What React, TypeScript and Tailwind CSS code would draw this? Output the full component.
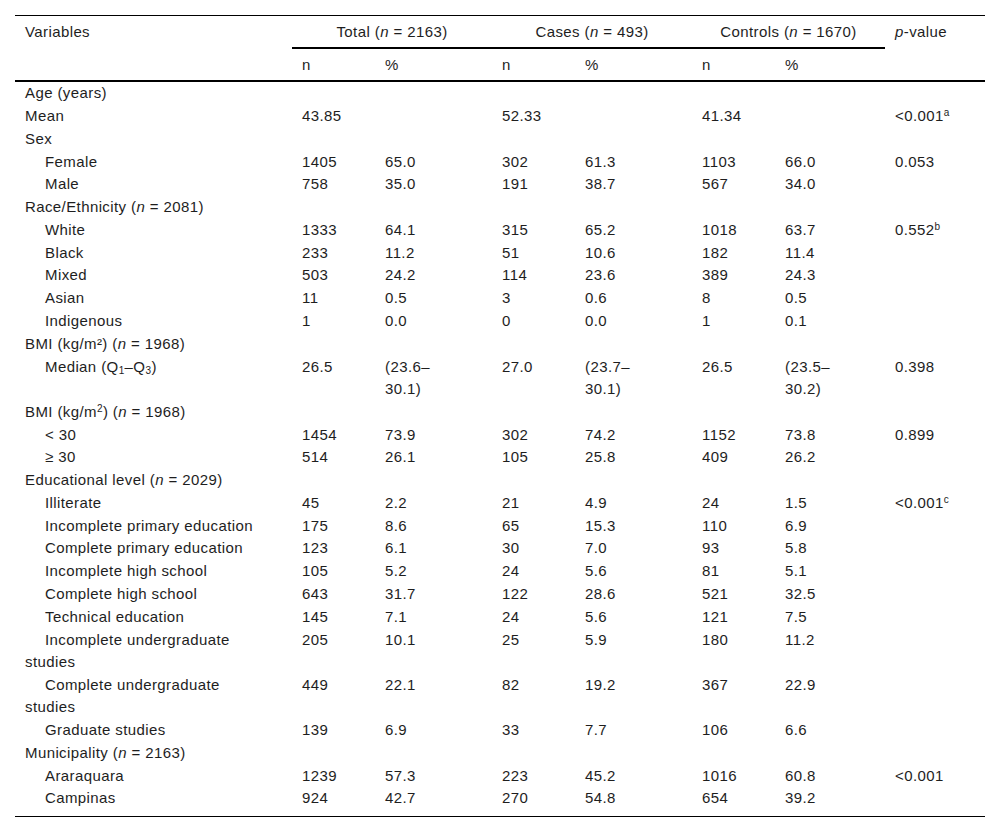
import React from "react";

type Row = {
  label: React.ReactNode;
  indent?: boolean;
  cells?: React.ReactNode[];
  p?: React.ReactNode;
};

const sup = (s: string) => <sup className="text-[10px]">{s}</sup>;
const I = ({ children }: { children: React.ReactNode }) => <i>{children}</i>;

const rows: Row[] = [
  { label: "Age (years)" },
  { label: "Mean", cells: ["43.85", "", "52.33", "", "41.34", ""], p: <>&lt;0.001{sup("a")}</> },
  { label: "Sex" },
  { label: "Female", indent: true, cells: ["1405", "65.0", "302", "61.3", "1103", "66.0"], p: "0.053" },
  { label: "Male", indent: true, cells: ["758", "35.0", "191", "38.7", "567", "34.0"] },
  { label: <>Race/Ethnicity (<I>n</I> = 2081)</> },
  { label: "White", indent: true, cells: ["1333", "64.1", "315", "65.2", "1018", "63.7"], p: <>0.552{sup("b")}</> },
  { label: "Black", indent: true, cells: ["233", "11.2", "51", "10.6", "182", "11.4"] },
  { label: "Mixed", indent: true, cells: ["503", "24.2", "114", "23.6", "389", "24.3"] },
  { label: "Asian", indent: true, cells: ["11", "0.5", "3", "0.6", "8", "0.5"] },
  { label: "Indigenous", indent: true, cells: ["1", "0.0", "0", "0.0", "1", "0.1"] },
  { label: <>BMI (kg/m²) (<I>n</I> = 1968)</> },
  {
    label: (
      <>
        Median (Q<sub className="text-[10px]">1</sub>–Q<sub className="text-[10px]">3</sub>)
      </>
    ),
    indent: true,
    cells: [
      "26.5",
      <>(23.6–<br />30.1)</>,
      "27.0",
      <>(23.7–<br />30.1)</>,
      "26.5",
      <>(23.5–<br />30.2)</>,
    ],
    p: "0.398",
  },
  { label: <>BMI (kg/m{sup("2")}) (<I>n</I> = 1968)</> },
  { label: "< 30", indent: true, cells: ["1454", "73.9", "302", "74.2", "1152", "73.8"], p: "0.899" },
  { label: "≥ 30", indent: true, cells: ["514", "26.1", "105", "25.8", "409", "26.2"] },
  { label: <>Educational level (<I>n</I> = 2029)</> },
  { label: "Illiterate", indent: true, cells: ["45", "2.2", "21", "4.9", "24", "1.5"], p: <>&lt;0.001{sup("c")}</> },
  { label: "Incomplete primary education", indent: true, cells: ["175", "8.6", "65", "15.3", "110", "6.9"] },
  { label: "Complete primary education", indent: true, cells: ["123", "6.1", "30", "7.0", "93", "5.8"] },
  { label: "Incomplete high school", indent: true, cells: ["105", "5.2", "24", "5.6", "81", "5.1"] },
  { label: "Complete high school", indent: true, cells: ["643", "31.7", "122", "28.6", "521", "32.5"] },
  { label: "Technical education", indent: true, cells: ["145", "7.1", "24", "5.6", "121", "7.5"] },
  {
    label: <>Incomplete undergraduate<br />studies</>,
    indent: true,
    cells: ["205", "10.1", "25", "5.9", "180", "11.2"],
  },
  {
    label: <>Complete undergraduate<br />studies</>,
    indent: true,
    cells: ["449", "22.1", "82", "19.2", "367", "22.9"],
  },
  { label: "Graduate studies", indent: true, cells: ["139", "6.9", "33", "7.7", "106", "6.6"] },
  { label: <>Municipality (<I>n</I> = 2163)</> },
  { label: "Araraquara", indent: true, cells: ["1239", "57.3", "223", "45.2", "1016", "60.8"], p: "<0.001" },
  { label: "Campinas", indent: true, cells: ["924", "42.7", "270", "54.8", "654", "39.2"] },
];

export default function App() {
  return (
    <div
      className="w-[1000px] h-[833px] bg-white pt-[15px] px-[15px] text-[15px] tracking-[0.4px] text-[#1e1e1e]"
      style={{ fontFamily: '"Liberation Sans", Arial, sans-serif' }}
    >
      <table className="w-[970px] table-fixed border-separate border-spacing-0">
        <colgroup>
          <col className="w-[277px]" />
          <col className="w-[83px]" />
          <col className="w-[117px]" />
          <col className="w-[83px]" />
          <col className="w-[117px]" />
          <col className="w-[83px]" />
          <col className="w-[110px]" />
          <col className="w-[100px]" />
        </colgroup>
        <thead>
          <tr>
            <th
              rowSpan={2}
              className="border-t border-b-2 border-black pl-[10px] text-left align-top font-normal leading-[31px]"
            >
              Variables
            </th>
            <th colSpan={2} className="border-t border-b-2 border-black text-center font-normal leading-[31px] h-[34px]">
              Total (<I>n</I> = 2163)
            </th>
            <th colSpan={2} className="border-t border-b-2 border-black text-center font-normal leading-[31px]">
              Cases (<I>n</I> = 493)
            </th>
            <th colSpan={2} className="border-t border-b-2 border-black text-center font-normal leading-[31px]">
              Controls (<I>n</I> = 1670)
            </th>
            <th
              rowSpan={2}
              className="border-t border-b-2 border-black pl-[10px] text-left align-top font-normal leading-[31px]"
            >
              <I>p</I>-value
            </th>
          </tr>
          <tr>
            {["n", "%", "n", "%", "n", "%"].map((h, i) => (
              <th key={i} className="border-b-2 border-black pl-[10px] text-left font-normal leading-[31px] h-[33px]">
                {h}
              </th>
            ))}
          </tr>
        </thead>
        <tbody>
          {rows.map((r, i) => {
            const last = i === rows.length - 1;
            const cellCls = `align-top leading-[22.4px] pl-[10px] ${
              last ? "pt-[0.2px] pb-[6.8px] border-b border-black" : "py-[0.2px]"
            }`;
            const cells = r.cells ?? ["", "", "", "", "", ""];
            return (
              <tr key={i}>
                <td className={`${cellCls} ${r.indent ? "indent-5" : ""}`}>{r.label}</td>
                {cells.map((c, j) => (
                  <td key={j} className={cellCls}>
                    {c}
                  </td>
                ))}
                <td className={cellCls}>{r.p ?? ""}</td>
              </tr>
            );
          })}
        </tbody>
      </table>
    </div>
  );
}
